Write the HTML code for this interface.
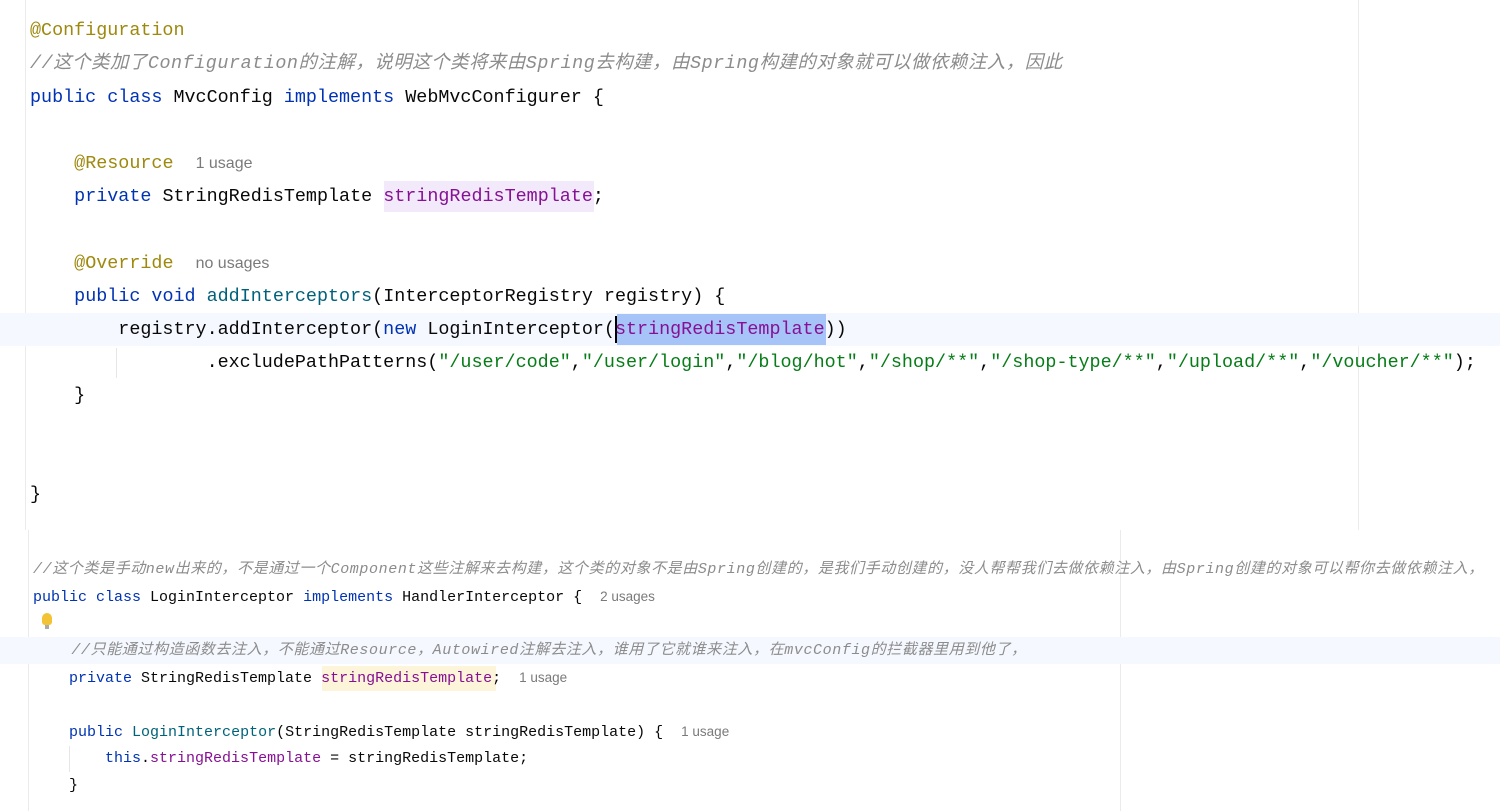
<!DOCTYPE html>
<html><head><meta charset="utf-8"><style>
body{margin:0;width:1500px;height:811px;background:#fff;position:relative;overflow:hidden}
.l{position:absolute;white-space:pre;font-family:"Liberation Mono","Noto Sans CJK SC",monospace;color:#080808}
.t{font-size:18.4px;line-height:33px;left:30px}
.b{font-size:15px;line-height:27px;left:33px}
.k{color:#0033b3}.a{color:#9e880d}.c{color:#8c8c8c;font-style:italic}.s{color:#067d17}.f{color:#871094}.m{color:#00627a}
.h{font-family:"Liberation Sans",sans-serif;color:#7a7a7a;font-style:normal}
.t .h{font-size:16px}.b .h{font-size:13.5px}
</style></head><body>
<div style="position:absolute;left:25px;top:0;width:1px;height:530px;background:#ebebeb"></div>
<div style="position:absolute;left:1358px;top:0;width:1px;height:530px;background:#ebebeb"></div>
<div style="position:absolute;left:28px;top:530px;width:1px;height:281px;background:#ebebeb"></div>
<div style="position:absolute;left:1120px;top:530px;width:1px;height:281px;background:#ebebeb"></div>
<div style="position:absolute;left:0;top:313px;width:1500px;height:33px;background:#f5f8fe"></div>
<div style="position:absolute;left:0;top:637px;width:1500px;height:27px;background:#f5f8fe"></div>
<div style="position:absolute;left:617px;top:314px;width:209px;height:31px;background:#a6c4f7"></div>
<div style="position:absolute;left:615px;top:316px;width:2px;height:27px;background:#000"></div>
<div style="position:absolute;left:384px;top:181px;width:210px;height:31px;background:#f2eafa"></div>
<div style="position:absolute;left:322px;top:666px;width:174px;height:25px;background:#fcf5d9"></div>
<div style="position:absolute;left:116px;top:348px;width:1px;height:30px;background:#e6e6e6"></div>
<div style="position:absolute;left:69px;top:746px;width:1px;height:26px;background:#e6e6e6"></div>
<div style="position:absolute;left:42px;top:613px;width:10px;height:12px;border-radius:5px 5px 3px 3px;background:#f2c335"></div>
<div style="position:absolute;left:45px;top:625px;width:4px;height:4px;background:#aaa"></div>

<div class="l t" style="top:14px"><span class="a">@Configuration</span></div>
<div class="l t c" style="top:47px;letter-spacing:0.55px">//这个类加了Configuration的注解，说明这个类将来由Spring去构建，由Spring构建的对象就可以做依赖注入，因此</div>
<div class="l t" style="top:81px"><span class="k">public class</span> MvcConfig <span class="k">implements</span> WebMvcConfigurer {</div>
<div class="l t" style="top:147px">    <span class="a">@Resource</span>  <span class="h">1 usage</span></div>
<div class="l t" style="top:180px">    <span class="k">private</span> StringRedisTemplate <span class="f">stringRedisTemplate</span>;</div>
<div class="l t" style="top:247px">    <span class="a">@Override</span>  <span class="h">no usages</span></div>
<div class="l t" style="top:280px">    <span class="k">public void</span> <span class="m">addInterceptors</span>(InterceptorRegistry registry) {</div>
<div class="l t" style="top:313px">        registry.addInterceptor(<span class="k">new</span> LoginInterceptor(<span class="f">stringRedisTemplate</span>))</div>
<div class="l t" style="top:346px">                .excludePathPatterns(<span class="s">"/user/code"</span>,<span class="s">"/user/login"</span>,<span class="s">"/blog/hot"</span>,<span class="s">"/shop/**"</span>,<span class="s">"/shop-type/**"</span>,<span class="s">"/upload/**"</span>,<span class="s">"/voucher/**"</span>);</div>
<div class="l t" style="top:379px">    }</div>
<div class="l t" style="top:478px">}</div>

<div class="l b c" style="top:556px;letter-spacing:0.6px">//这个类是手动new出来的，不是通过一个Component这些注解来去构建，这个类的对象不是由Spring创建的，是我们手动创建的，没人帮帮我们去做依赖注入，由Spring创建的对象可以帮你去做依赖注入，</div>
<div class="l b" style="top:583px"><span class="k">public class</span> LoginInterceptor <span class="k">implements</span> HandlerInterceptor {  <span class="h">2 usages</span></div>
<div class="l b c" style="top:637px;letter-spacing:0.6px">    //只能通过构造函数去注入，不能通过Resource，Autowired注解去注入，谁用了它就谁来注入，在mvcConfig的拦截器里用到他了，</div>
<div class="l b" style="top:664px">    <span class="k">private</span> StringRedisTemplate <span class="f">stringRedisTemplate</span>;  <span class="h">1 usage</span></div>
<div class="l b" style="top:718px">    <span class="k">public</span> <span class="m">LoginInterceptor</span>(StringRedisTemplate stringRedisTemplate) {  <span class="h">1 usage</span></div>
<div class="l b" style="top:745px">        <span class="k">this</span>.<span class="f">stringRedisTemplate</span> = stringRedisTemplate;</div>
<div class="l b" style="top:772px">    }</div>
</body></html>
